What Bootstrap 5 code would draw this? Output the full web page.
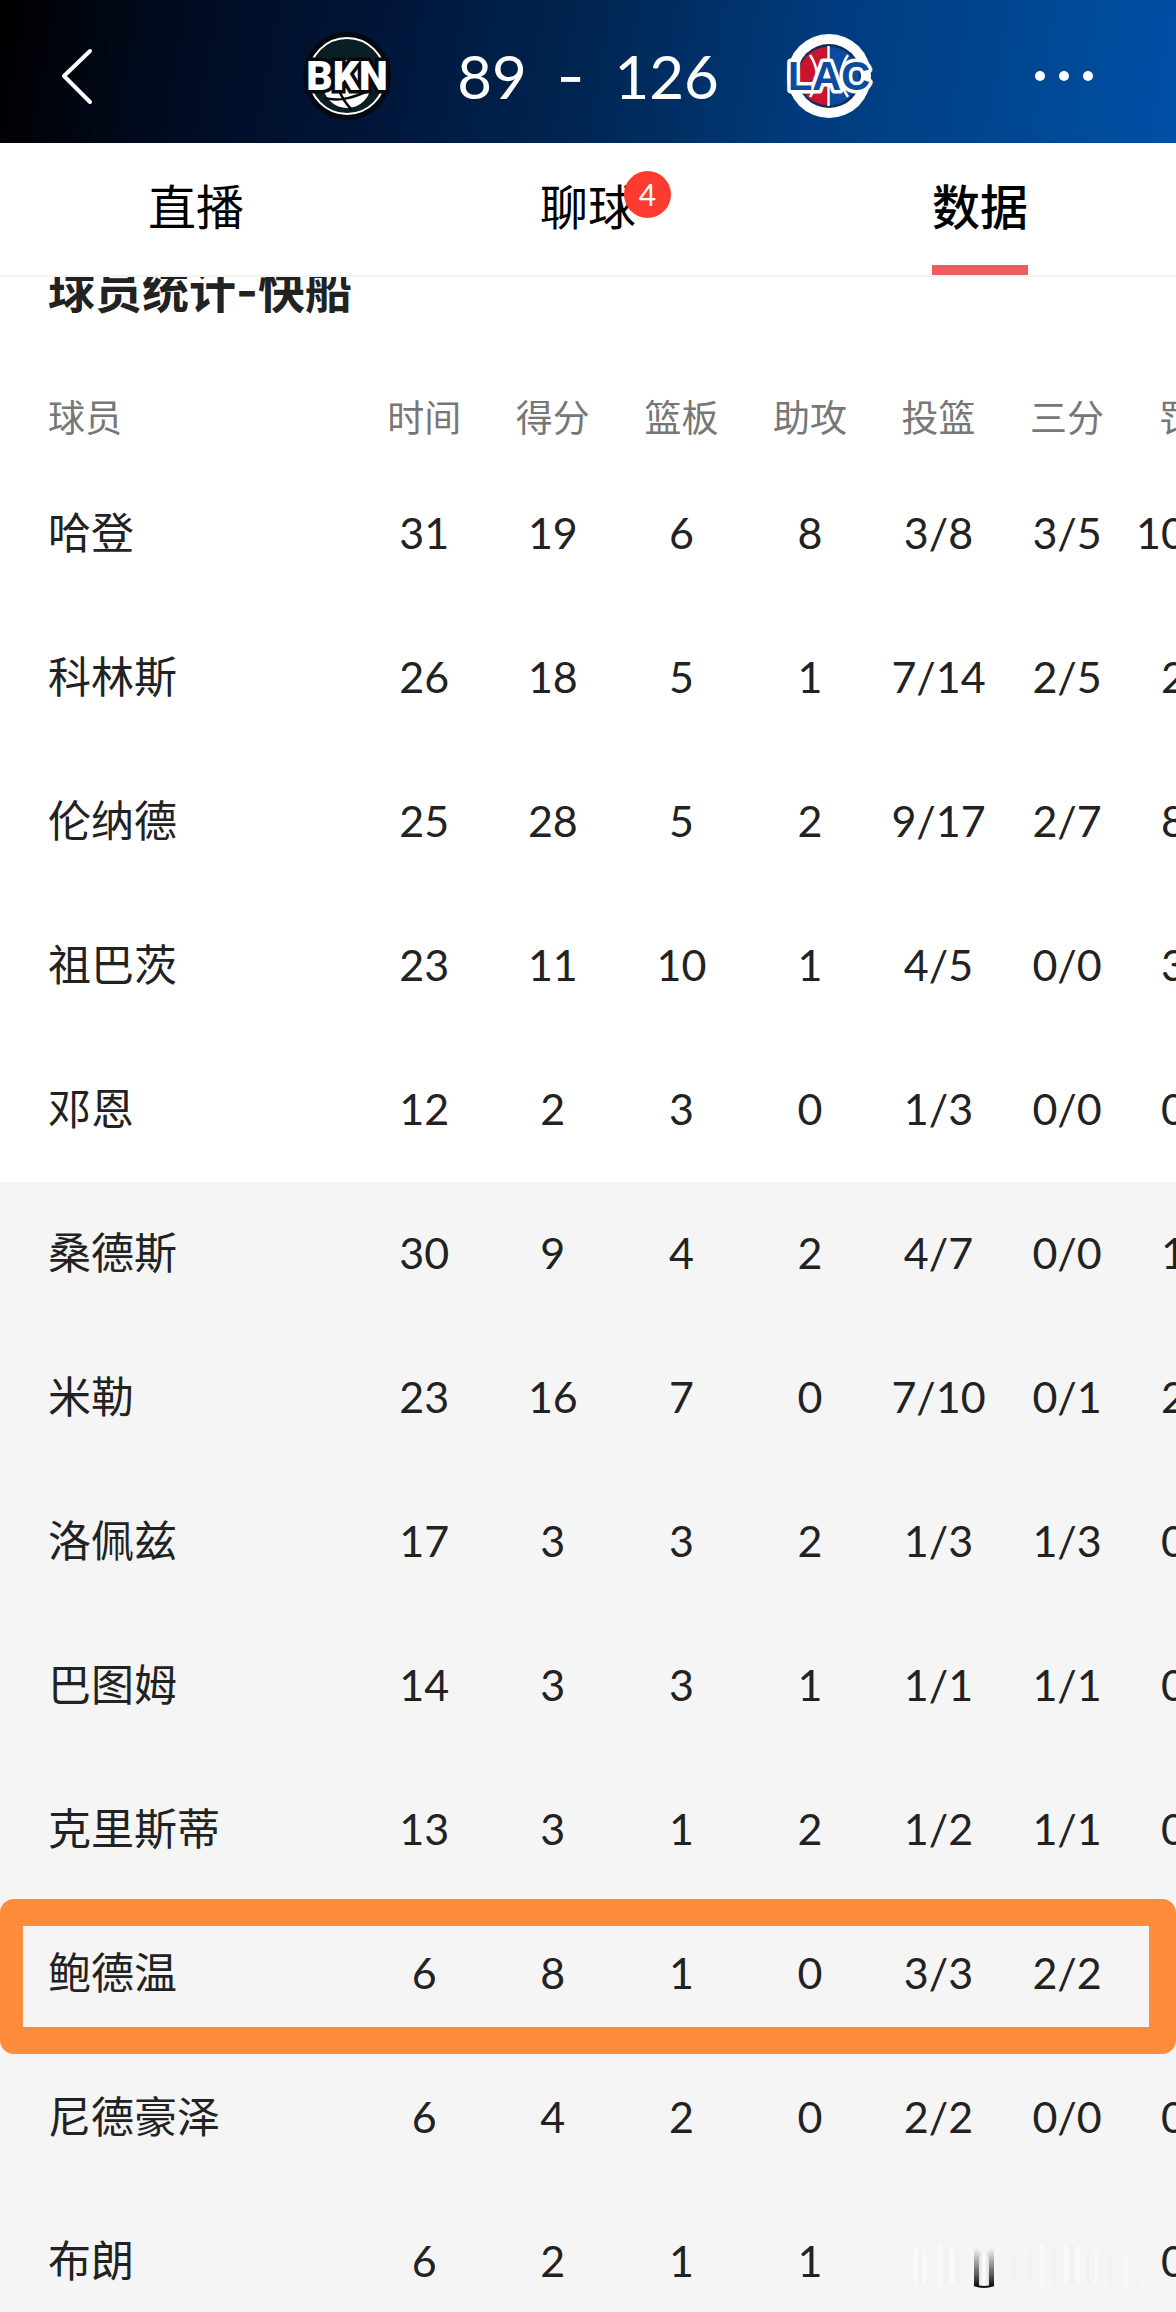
<!DOCTYPE html>
<html lang="zh-CN">
<head>
<meta charset="utf-8">
<meta name="viewport" content="width=device-width, initial-scale=1">
<title>篮网 89 - 126 快船</title>
<link href="https://cdn.jsdelivr.net/npm/bootstrap@5.3.0/dist/css/bootstrap.min.css" rel="stylesheet">
<style>
  body { font-family: Lato, "Noto Sans CJK SC", sans-serif; color: #222; background: #fff; }
  .score-bar { height: 143px; background: linear-gradient(100deg, #000 0%, #000c22 16%, #00163a 33%, #002652 50%, #003a7c 68%, #00468f 84%, #0050a8 100%); color: #fff; }
  .bar-side { width: 290px; }
  .bar-side .btn { line-height: 0; }
  .score-text { font-size: 60px; line-height: 72px; gap: 30px; padding: 0 62px; }
  .score-dash { font-family: Inter, sans-serif; }
  .tab-strip { height: 134px; border-bottom: 2px solid #f4f4f5; }
  .tab-strip .nav-link { font-size: 48px; line-height: 64px; color: #000; padding: 32px 0 26px; border-bottom: 10px solid transparent; border-radius: 0; }
  .tab-strip .nav-link.active { font-weight: 500; border-bottom-color: #f05b5b; }
  .unread { left: 84px; top: 28px; width: 47px; height: 47px; border-radius: 50%; background: #ff3b30; color: #fff; font-size: 30px; line-height: 47px; }
  .stat-title { font-family: Inter, "Noto Sans CJK SC", sans-serif; font-size: 47px; line-height: 64px; margin-top: -18px; padding: 0 48px 49px; }
  .stat-scroll { overflow-x: auto; overflow-y: hidden; scrollbar-width: none; }
  .stat-scroll::-webkit-scrollbar { display: none; }
  .stat-table { width: 1260px; min-width: 107%; table-layout: fixed; }
  .stat-table th, .stat-table td { padding: 0; text-align: center; vertical-align: middle; font-weight: 400; white-space: nowrap; }
  .stat-table thead th { height: 90px; padding-top: 2px; font-size: 37px; line-height: 56px; color: #777; }
  .stat-table tbody th, .stat-table tbody td { height: 144px; font-size: 43px; line-height: 64px; padding-bottom: 2px; }
  .stat-table th:first-child { width: 360px; padding-left: 48px; text-align: left; }
  .bench { background: #f5f5f5; }
  .picked::after { content: ""; position: absolute; top: -3px; bottom: -8px; left: 0; width: 100vw; border: 27px solid #ff8c3a; border-left-width: 23px; border-radius: 14px; z-index: 2; }
  .smear { left: 26px; top: 50px; z-index: 1; }
</style>
</head>
<body>
<div class="vh-100 d-flex flex-column overflow-hidden">
  <header class="score-bar d-flex flex-shrink-0 align-items-center justify-content-between">
    <div class="bar-side ps-5 pt-2">
      <button type="button" class="btn border-0 p-0 ms-2" aria-label="返回">
        <svg width="44" height="64" viewBox="0 0 44 64" fill="none" stroke="#fff" stroke-width="4" stroke-linecap="round" stroke-linejoin="round"><path d="M34 7 8 32 34 58"/></svg>
      </button>
    </div>
    <div class="d-flex align-items-center flex-shrink-0 pt-2">
      <svg width="96" height="96" viewBox="0 0 96 96" role="img" aria-label="BKN">
        <circle cx="48" cy="48" r="44" fill="#05090d"/>
        <circle cx="48" cy="48" r="38" fill="#0b1d25" stroke="#fff" stroke-width="2"/>
        <circle cx="48" cy="56" r="24" fill="#fff"/>
        <path d="M40 62c3 8 7 14 13 20M25 70c17 4 31-1 46-8M60 33c-5 4-9 9-12 16" fill="none" stroke="#05090d" stroke-width="2.500"/>
        <text x="48" y="62" text-anchor="middle" font-family="Roboto, sans-serif" font-weight="900" font-size="41" fill="#fff" stroke="#05090d" stroke-width="7" paint-order="stroke">BKN</text>
      </svg>
      <div class="score-text d-flex text-nowrap"><span>89</span><span class="score-dash">-</span><span>126</span></div>
      <svg width="96" height="96" viewBox="0 0 96 96" role="img" aria-label="LAC">
        <circle cx="48" cy="48" r="42" fill="#fff"/>
        <circle cx="48" cy="48" r="32" fill="#0f2c5e"/>
        <path d="M46.500 19a29 29 0 0 0 0 58z" fill="#c8142f"/>
        <path d="M49 19a29 29 0 0 1 0 58z" fill="#0b4ba0"/>
        <path d="M47.500 18v60M29 27c9 13 9 29 0 42M67 27c-9 13-9 29 0 42" fill="none" stroke="#fff" stroke-width="2.500"/>
        <text x="48" y="62" text-anchor="middle" font-family="'Liberation Sans', Arial, sans-serif" font-weight="700" font-size="40" fill="#0b4ba0" stroke="#fff" stroke-width="7" paint-order="stroke" stroke-linejoin="round">LAC</text>
      </svg>
    </div>
    <div class="bar-side text-end pt-2 pe-5">
      <button type="button" class="btn border-0 p-0 me-4" aria-label="更多">
        <svg width="80" height="40" viewBox="0 0 80 40" fill="#fff"><circle cx="16" cy="20" r="5"/><circle cx="40" cy="20" r="5"/><circle cx="64" cy="20" r="5"/></svg>
      </button>
    </div>
  </header>

  <nav class="tab-strip row g-0 flex-shrink-0" aria-label="比赛">
    <div class="col d-flex justify-content-center"><a class="nav-link" href="#live">直播</a></div>
    <div class="col d-flex justify-content-center"><a class="nav-link position-relative" href="#chat">聊球<span class="unread position-absolute text-center">4</span></a></div>
    <div class="col d-flex justify-content-center"><a class="nav-link active" href="#stats" aria-current="page">数据</a></div>
  </nav>

  <main class="flex-grow-1 overflow-hidden" id="stats">
    <h1 class="stat-title fw-bold mb-0">球员统计-快船</h1>
    <div class="stat-scroll">
      <table class="stat-table">
        <thead>
          <tr><th scope="col">球员</th><th scope="col">时间</th><th scope="col">得分</th><th scope="col">篮板</th><th scope="col">助攻</th><th scope="col">投篮</th><th scope="col">三分</th><th scope="col">罚球</th></tr>
        </thead>
        <tbody>
          <tr><th scope="row">哈登</th><td>31</td><td>19</td><td>6</td><td>8</td><td>3/8</td><td>3/5</td><td>10/10</td></tr>
          <tr><th scope="row">科林斯</th><td>26</td><td>18</td><td>5</td><td>1</td><td>7/14</td><td>2/5</td><td>2/2</td></tr>
          <tr><th scope="row">伦纳德</th><td>25</td><td>28</td><td>5</td><td>2</td><td>9/17</td><td>2/7</td><td>8/8</td></tr>
          <tr><th scope="row">祖巴茨</th><td>23</td><td>11</td><td>10</td><td>1</td><td>4/5</td><td>0/0</td><td>3/4</td></tr>
          <tr><th scope="row">邓恩</th><td>12</td><td>2</td><td>3</td><td>0</td><td>1/3</td><td>0/0</td><td>0/0</td></tr>
        </tbody>
        <tbody class="bench">
          <tr><th scope="row">桑德斯</th><td>30</td><td>9</td><td>4</td><td>2</td><td>4/7</td><td>0/0</td><td>1/2</td></tr>
          <tr><th scope="row">米勒</th><td>23</td><td>16</td><td>7</td><td>0</td><td>7/10</td><td>0/1</td><td>2/2</td></tr>
          <tr><th scope="row">洛佩兹</th><td>17</td><td>3</td><td>3</td><td>2</td><td>1/3</td><td>1/3</td><td>0/0</td></tr>
          <tr><th scope="row">巴图姆</th><td>14</td><td>3</td><td>3</td><td>1</td><td>1/1</td><td>1/1</td><td>0/0</td></tr>
          <tr><th scope="row">克里斯蒂</th><td>13</td><td>3</td><td>1</td><td>2</td><td>1/2</td><td>1/1</td><td>0/0</td></tr>
          <tr><th scope="row" class="picked position-relative">鲍德温</th><td>6</td><td>8</td><td>1</td><td>0</td><td>3/3</td><td>2/2</td><td>0/0</td></tr>
          <tr><th scope="row">尼德豪泽</th><td>6</td><td>4</td><td>2</td><td>0</td><td>2/2</td><td>0/0</td><td>0/0</td></tr>
          <tr><th scope="row">布朗</th><td>6</td><td>2</td><td>1</td><td>1</td>
            <td class="position-relative">
              <svg class="smear position-absolute" width="250" height="50" viewBox="0 0 250 50" aria-hidden="true">
                <defs>
                  <linearGradient id="ink" x1="0" y1="0" x2="0" y2="1"><stop offset="0" stop-color="#222" stop-opacity="0"/><stop offset="1" stop-color="#111"/></linearGradient>
                  <linearGradient id="core" x1="0" y1="0" x2="1" y2="0"><stop offset="0" stop-color="#ddd"/><stop offset=".5" stop-color="#fff"/><stop offset="1" stop-color="#ddd"/></linearGradient>
                </defs>
                <path d="M16 6v40M24 10v34M40 4v42M52 6v40M142 4v42M166 4v42M178 6v38M196 10v34M226 14v32" stroke="#f9f9f9" stroke-width="4"/>
                <path d="M20 10v36M46 8v38M58 12v32M114 12v32M130 10v34M154 8v38M172 6v40M188 10v36M210 14v32M238 38v8" stroke="#f0f0f0" stroke-width="2"/>
                <path d="M79 12h10v34h-10z" fill="url(#core)"/>
                <path d="M74 8h5v38h-5zM89 8h5v38h-5z" fill="url(#ink)"/>
                <path d="M74 45q10 4 20 0" fill="none" stroke="#111" stroke-width="2"/>
              </svg>
            </td><td></td><td>0/0</td></tr>
        </tbody>
      </table>
    </div>
  </main>
</div>
<script src="https://cdn.jsdelivr.net/npm/bootstrap@5.3.0/dist/js/bootstrap.bundle.min.js"></script>
</body>
</html>
